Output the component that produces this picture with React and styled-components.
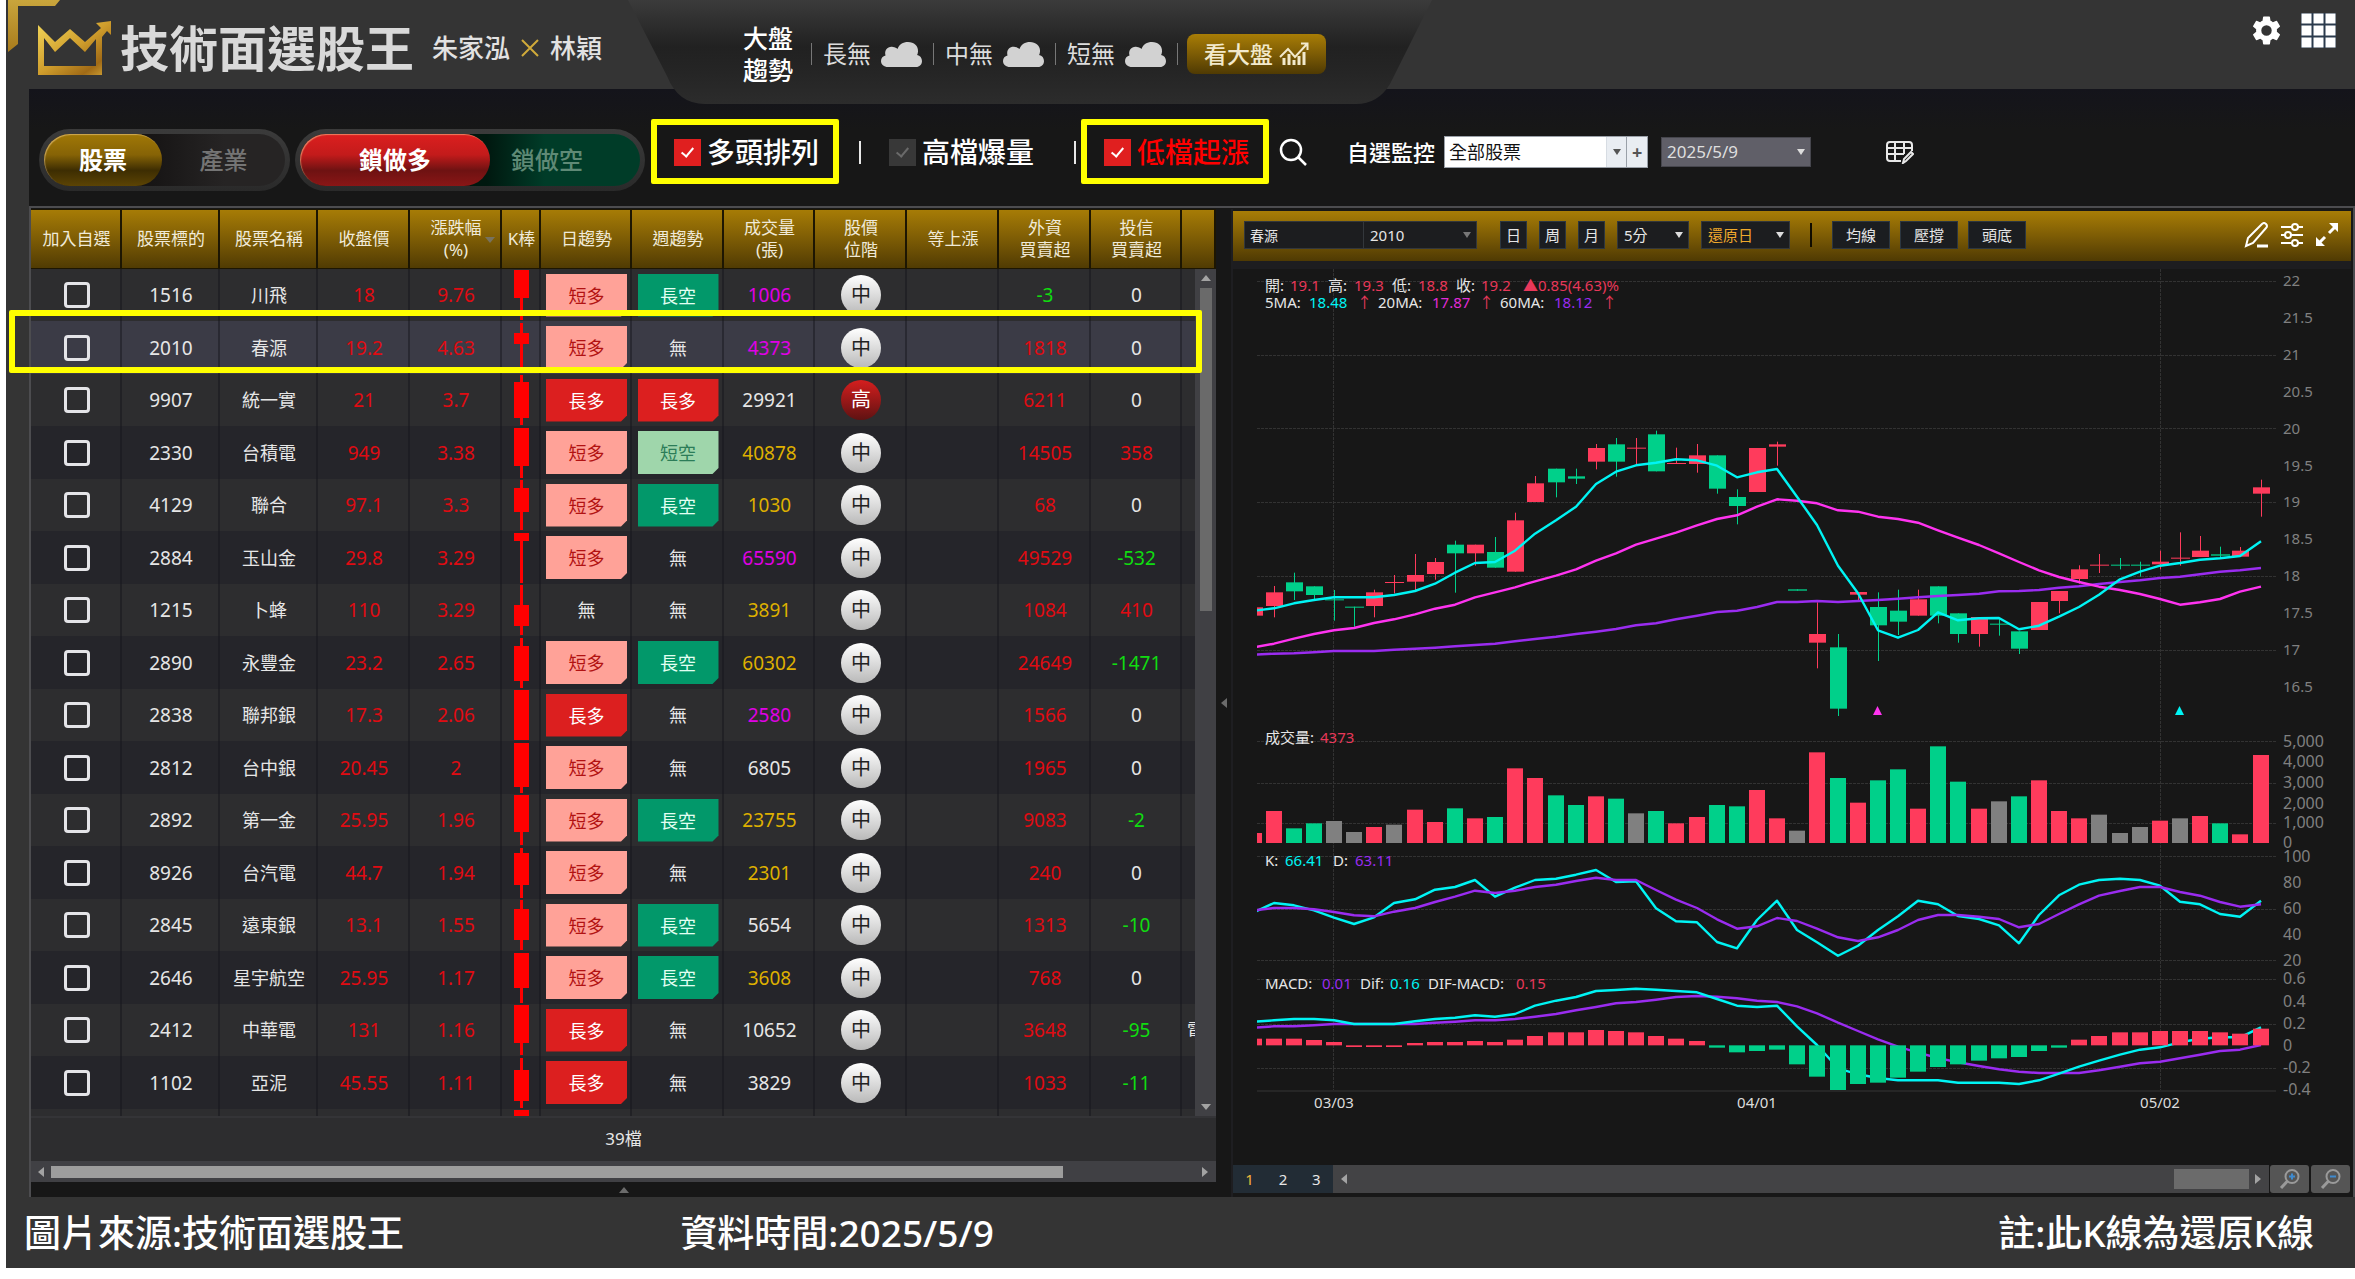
import React from "react";
import styled, { createGlobalStyle, css } from "styled-components";

const Global = createGlobalStyle`
  *, *::before, *::after { box-sizing: border-box; }
  body {
    margin: 0;
    background: #fff;
    color: #e6e6e6;
    font-family: "Noto Sans", "Noto Sans CJK TC", sans-serif;
    font-size: 18px;
    line-height: 22px;
  }
  button, select, input { font: inherit; color: inherit; margin: 0; }
  button { padding: 0; border: 0; background: none; cursor: pointer; }
`;

const gold = "linear-gradient(#a87d06, #7d5c05 50%, #4f3a03)";

/* ---------- page frame ---------- */

const Shell = styled.div`
  margin: 0 0 11px 6px;
  background: #343434;
`;

const Header = styled.header`
  position: relative;
  z-index: 1;
  display: flex;
  align-items: flex-start;
  height: 89px;
`;

const Brand = styled.div`
  position: relative;
  flex: 0 0 622px;
  display: flex;
  align-items: center;
  height: 89px;
  padding: 6px 0 0 32px;
`;

const Corner = styled.svg`
  position: absolute;
  left: 2px;
  top: 0;
`;

const Title = styled.h1`
  margin: 0 18px 0 9px;
  font-size: 49px;
  line-height: 56px;
  font-weight: 700;
  color: #d9d9d9;
`;

const Authors = styled.p`
  display: flex;
  align-items: center;
  gap: 10px;
  margin: 0;
  font-size: 26px;
  line-height: 32px;
  font-weight: 500;
  color: #e2e2e2;
`;

const Trend = styled.section`
  position: relative;
  display: flex;
  align-items: center;
  flex: 0 0 804px;
  height: 104px;
  padding: 4px 0 0 115px;
`;

const TrendShape = styled.svg`
  position: absolute;
  inset: 0;
`;

const TrendTitle = styled.h2`
  position: relative;
  width: 50px;
  margin: 0 18px 0 0;
  font-size: 25px;
  line-height: 32px;
  font-weight: 500;
  color: #fff;
`;

const TrendItem = styled.span`
  position: relative;
  display: flex;
  align-items: center;
  gap: 10px;
  margin-right: 11px;
  padding-left: 12px;
  font-size: 24px;
  line-height: 32px;
  color: #dcdcdc;
  &::before {
    content: "";
    position: absolute;
    left: 0;
    height: 22px;
    border-left: 1px solid #777;
  }
`;

const TrendEnd = styled.i`
  position: relative;
  width: 1px;
  height: 22px;
  margin-right: 9px;
  background: #777;
`;

const MarketButton = styled.button`
  position: relative;
  display: flex;
  align-items: center;
  justify-content: center;
  gap: 6px;
  width: 139px;
  height: 40px;
  border-radius: 8px;
  background: ${gold};
  font-size: 23px;
  font-weight: 500;
  color: #f2e9cc;
`;

const HeaderTools = styled.nav`
  display: flex;
  align-items: center;
  gap: 20px;
  margin-left: auto;
  padding: 13px 19px 0 0;
  button { display: flex; }
`;

const Content = styled.main`
  margin-left: 23px;
  background: #171717;
`;

/* ---------- toolbar ---------- */

const Toolbar = styled.div`
  display: flex;
  align-items: flex-start;
  height: 117px;
  padding: 40px 0 0 10px;
  background: linear-gradient(#14141b, #171717 40px);
`;

const Switch = styled.div`
  display: flex;
  width: ${(p) => p.$width};
  height: 62px;
  margin-right: 5px;
  padding: 5px;
  border-radius: 31px;
  background: linear-gradient(#3b3b3b, #2a2a2a);
`;

const SwitchTrack = styled.div`
  display: flex;
  flex: 1;
  border-radius: 26px;
  background: ${(p) => p.$fill};
`;

const tones = {
  gold: "linear-gradient(#a17806, #866306 40%, #3d2d02 70%, #5c4404)",
  red: "linear-gradient(#dc1f1f, #c31b1b 40%, #6e1212 70%, #8a1616)",
};

const SwitchButton = styled.button`
  width: ${(p) => p.$width || "auto"};
  flex: ${(p) => (p.$width ? "none" : 1)};
  padding-right: ${(p) => (p.$width ? 0 : p.$pad)};
  border-radius: 26px;
  font-size: 24px;
  font-weight: 500;
  color: ${(p) => p.$color || "#fff"};
  ${(p) =>
    p.$tone &&
    css`
      background: ${tones[p.$tone]};
      box-shadow: inset 1px 1px 1px rgba(255, 220, 160, 0.5);
      font-weight: 700;
    `}
`;

const ToolGroup = styled.div`
  display: flex;
  align-items: center;
  height: 46px;
  margin-left: 24px;
`;

const Filter = styled.label`
  position: relative;
  display: flex;
  align-items: center;
  gap: 6px;
  font-size: 28px;
  line-height: 36px;
  font-weight: 500;
  color: ${(p) => p.$color || "#fff"};
  ${(p) =>
    p.$framed &&
    css`
      &::after {
        content: "";
        position: absolute;
        inset: -15px -20px -14px -23px;
        border: 6px solid #ff0;
        border-radius: 2px;
      }
    `}
`;

const FilterBox = styled.input`
  appearance: none;
  position: relative;
  width: 27px;
  height: 27px;
  background: ${(p) => (p.defaultChecked ? "#e01f1f" : "#383838")};
  &::before {
    content: "";
    position: absolute;
    left: 10px;
    top: 6px;
    width: 7px;
    height: 12px;
    border: solid ${(p) => (p.defaultChecked ? "#fff" : "#6a6a6a")};
    border-width: 0 2px 2px 0;
    transform: rotate(40deg);
  }
`;

const FilterGap = styled.span`
  width: 2px;
  height: 23px;
  margin: 0 28px 0 40px;
  background: #e8e8e8;
`;

const SearchButton = styled.button`
  display: flex;
  margin: 0 40px 0 30px;
`;

const WatchLabel = styled.label`
  margin-right: 9px;
  font-size: 22px;
  font-weight: 500;
  color: #fff;
`;

const SelectWrap = styled.span`
  display: inline-grid;
  align-items: center;
  width: ${(p) => p.$width};
  &::after {
    content: "";
    grid-area: 1 / 1;
    justify-self: end;
    margin-right: 6px;
    border: 4px solid transparent;
    border-top: 6px solid ${(p) => p.$arrow || "#ddd"};
    border-bottom: 0;
    pointer-events: none;
  }
  select {
    grid-area: 1 / 1;
    width: 100%;
    appearance: none;
    border-radius: 0;
    outline: 0;
  }
`;

const WhiteSelect = styled.select`
  height: 32px;
  padding: 0 4px;
  border: 1px solid #9aa0a8;
  background: linear-gradient(90deg, #fff calc(100% - 20px), #c5ccd4 calc(100% - 20px), #e9edf2 calc(100% - 19px));
  font-size: 18px;
  && { color: #111; }
`;

const PlusButton = styled.button`
  width: 21px;
  height: 32px;
  margin-right: 13px;
  border: 1px solid #9aa0a8;
  border-left: 0;
  background: #e9edf2;
  font-weight: 700;
  line-height: 28px;
  color: #555;
`;

const DateSelect = styled.select`
  height: 30px;
  padding: 0 5px;
  border: 1px solid #46464d;
  background: #605f68;
  font-size: 17px;
  color: #dedede;
`;

const EditTable = styled.button`
  display: flex;
  margin-left: 75px;
`;

/* ---------- panels ---------- */

const Panels = styled.div`
  display: grid;
  grid-template-columns: minmax(0, 1185fr) 17px minmax(0, 1118fr);
  padding: 1px 2px 0 0;
  border: solid #4c4c4f;
  border-width: 2px 2px 0 2px;
`;

const ListPanel = styled.section`
  position: relative;
  background: #171717;
`;

const ListView = styled.div`
  position: relative;
  height: 907px;
  overflow: hidden;
`;

const RowFrame = styled.div`
  position: absolute;
  top: 101px;
  left: -22px;
  right: 14px;
  height: 63px;
  border: 6px solid #ff0;
  border-radius: 2px;
  pointer-events: none;
`;

const Table = styled.table`
  width: 100%;
  table-layout: fixed;
  border-collapse: separate;
  border-spacing: 0;
  text-align: center;
`;

const HeadCell = styled.th`
  position: relative;
  height: 60px;
  padding: 0;
  background: ${gold};
  box-shadow: inset -2px 0 #1d1602, inset 0 -1px #1d1602, inset 0 1px #1d1602;
  font-size: 17px;
  font-weight: 400;
  line-height: 22px;
  white-space: pre-line;
  color: #f0ead8;
`;

const SortMark = styled.i`
  position: absolute;
  right: 7px;
  top: 28px;
  border: 5px solid transparent;
  border-top: 6px solid #77725f;
  border-bottom: 0;
`;

const Row = styled.tr`
  height: 52px;
  background: ${(p) => (p.$selected ? "#3b3b46" : "#2d2d2f")};
  &:nth-child(even) {
    height: 53px;
    background: ${(p) => (p.$selected ? "#3b3b46" : "#25252a")};
  }
`;

const Cell = styled.td`
  padding: 0;
  box-shadow: inset -2px 0 rgba(20, 20, 26, 0.45);
  font-size: ${(p) => (p.$han ? "18px" : "19px")};
  line-height: 24px;
  color: ${(p) => p.$color || "#e6e6e6"};
  overflow: hidden;
  white-space: nowrap;
`;

const ClippedCell = styled(Cell)`
  padding-left: 5px;
  text-align: left;
`;

const PickBox = styled.input`
  appearance: none;
  display: block;
  width: 26px;
  height: 26px;
  && { margin: 0 auto; }
  border: 3px solid #e4e4e8;
  border-radius: 4px;
`;

const tagTones = {
  短多: ["#ffa298", "#b21212"],
  長多: ["#dc1f1f", "#fff"],
  長空: ["#02986a", "#e2fff2"],
  短空: ["#9fd6ab", "#2c7d58"],
};

const Tag = styled.span`
  display: block;
  width: 81px;
  height: 43px;
  margin: 0 auto;
  background: ${(p) => tagTones[p.$kind][0]};
  clip-path: polygon(0 0, 100% 0, 100% calc(100% - 6px), calc(100% - 6px) 100%, 0 100%);
  line-height: 44px;
  color: ${(p) => tagTones[p.$kind][1]};
`;

const Badge = styled.span`
  display: block;
  width: 40px;
  height: 40px;
  margin: 0 auto;
  border-radius: 50%;
  background: ${(p) => (p.$high ? "linear-gradient(#d51e1e, #5f1212)" : "linear-gradient(#fff, #b9b9b9)")};
  font-size: 20px;
  line-height: 40px;
  color: ${(p) => (p.$high ? "#fff" : "#222")};
`;

const KBar = styled.svg`
  display: block;
  margin: 0 auto;
`;

const VScroll = styled.div`
  position: absolute;
  top: 60px;
  right: 0;
  bottom: 0;
  width: 21px;
  display: flex;
  flex-direction: column;
  align-items: center;
  padding: 6px 0;
  background: #404044;
`;

const VThumb = styled.div`
  width: 12px;
  height: 323px;
  margin: 7px 0 auto;
  background: #6a6a6a;
`;

const Arrow = styled.button`
  width: 0;
  height: 0;
  border: solid transparent;
  ${(p) =>
    ({
      up: css`border-width: 0 5px 6px; border-bottom-color: #a3a3a3;`,
      down: css`border-width: 6px 5px 0; border-top-color: #a3a3a3;`,
      left: css`border-width: 5px 6px 5px 0; border-right-color: #a3a3a3;`,
      right: css`border-width: 5px 0 5px 6px; border-left-color: #a3a3a3;`,
    })[p.$to]}
`;

const FoldArrow = styled(Arrow)`
  opacity: 0.6;
`;

const ListTotal = styled.div`
  height: 45px;
  border-top: 2px solid #343437;
  background: #2d2d2f;
  font-size: 17px;
  line-height: 42px;
  text-align: center;
`;

const HScroll = styled.div`
  display: flex;
  align-items: center;
  height: 21px;
  padding: 0 8px 0 7px;
  background: #404044;
`;

const HThumb = styled.div`
  width: 1012px;
  height: 12px;
  margin: 0 auto 0 7px;
  background: #9d9d9d;
`;

const FoldBar = styled.div`
  display: flex;
  align-items: center;
  justify-content: center;
  height: 15px;
`;

const Divider = styled.div`
  display: flex;
  align-items: center;
  padding-left: 5px;
  border-right: 2px solid #1e1e21;
`;

const ChartPanel = styled.section`
  padding: 2px 0 4px;
  background: #171717;
`;

const ChartBar = styled.div`
  display: flex;
  align-items: center;
  height: 50px;
  padding: 0 12px 2px 11px;
  background: ${gold};
`;

const ChartSelect = styled.select`
  height: 28px;
  padding: 0 6px;
  border: 1px solid #33373b;
  background: #1c1d1f;
  font-size: 15px;
  color: ${(p) => p.$color || "#e6e6e6"};
`;

const StockName = styled.input`
  width: 119px;
  height: 28px;
  padding: 0 5px;
  border: 1px solid #33373b;
  border-right: 0;
  background: #1c1d1f;
  font-size: 14px;
`;

const BarGroup = styled.div`
  display: flex;
  gap: ${(p) => p.$gap || "12px"};
  margin-left: ${(p) => p.$before};
`;

const BarButton = styled.button`
  width: ${(p) => (p.$wide ? "58px" : "27px")};
  height: 28px;
  border: 1px solid #2c3640;
  background: #1b1d20;
  font-size: 15px;
  line-height: 24px;
`;

const BarRule = styled.i`
  width: 2px;
  height: 24px;
  margin-left: 20px;
  background: #100c00;
`;

const BarTools = styled.div`
  display: flex;
  gap: 12px;
  margin-left: auto;
  button { display: flex; }
`;

const Plot = styled.svg`
  display: block;
  width: 100%;
  height: auto;
  border-top: 8px solid #1d1d20;
  font-family: "Noto Sans", "Noto Sans CJK TC", sans-serif;
  font-size: 15px;
`;

const PageBar = styled.div`
  display: flex;
  height: 28px;
`;

const PageTabs = styled.div`
  display: flex;
  width: 100px;
  background: #222c35;
`;

const PageTab = styled.button`
  flex: 1;
  font-size: 15px;
  color: ${(p) => (p.$on ? "#f0b53a" : "#e6e6e6")};
`;

const PlotScroll = styled.div`
  flex: 1;
  display: flex;
  align-items: center;
  padding: 0 8px;
  background: #434345;
`;

const PlotThumb = styled.div`
  width: 75px;
  height: 20px;
  margin: 0 6px 0 auto;
  background: #6b6b6b;
`;

const ZoomButton = styled.button`
  display: flex;
  align-items: center;
  justify-content: center;
  width: 39px;
  margin: 0 1px 0 1px;
  border-radius: 3px;
  background: #555;
`;

const Notes = styled.footer`
  display: grid;
  grid-template-columns: 657fr 1319fr auto;
  align-items: center;
  height: 71px;
  padding: 0 41px 0 18px;
  font-size: 37px;
  line-height: 44px;
  font-weight: 500;
  color: #fff;
  p { margin: 0; }
`;

/* ---------- data ---------- */

const columns = [
  ["加入自選", 91], ["股票標的", 98], ["股票名稱", 98], ["收盤價", 92], ["漲跌幅\n(%)", 92],
  ["K棒", 39], ["日趨勢", 91], ["週趨勢", 92], ["成交量\n(張)", 91], ["股價\n位階", 92],
  ["等上漲", 92], ["外資\n買賣超", 92], ["投信\n買賣超", 91], ["", 34],
];

const volColors = { m: "#e000e6", y: "#deb000", w: "#e6e6e6" };

// code, name, close, change, candle body [top, bottom], day, week, volume, tone, level, foreign, trust, tail
const stocks = [
  ["1516", "川飛", "18", "9.76", [0, 28], "短多", "長空", "1006", "m", "中", -3, 0],
  ["2010", "春源", "19.2", "4.63", [10, 21], "短多", "無", "4373", "m", "中", 1818, 0],
  ["9907", "統一實", "21", "3.7", [7, 43], "長多", "長多", "29921", "w", "高", 6211, 0],
  ["2330", "台積電", "949", "3.38", [0, 38], "短多", "短空", "40878", "y", "中", 14505, 358],
  ["4129", "聯合", "97.1", "3.3", [8, 32], "短多", "長空", "1030", "y", "中", 68, 0],
  ["2884", "玉山金", "29.8", "3.29", [0, 8], "短多", "無", "65590", "m", "中", 49529, -532],
  ["1215", "卜蜂", "110", "3.29", [20, 41], "無", "無", "3891", "y", "中", 1084, 410],
  ["2890", "永豐金", "23.2", "2.65", [8, 43], "短多", "長空", "60302", "y", "中", 24649, -1471],
  ["2838", "聯邦銀", "17.3", "2.06", [0, 50], "長多", "無", "2580", "m", "中", 1566, 0],
  ["2812", "台中銀", "20.45", "2", [0, 44], "短多", "無", "6805", "w", "中", 1965, 0],
  ["2892", "第一金", "25.95", "1.96", [0, 37], "短多", "長空", "23755", "y", "中", 9083, -2],
  ["8926", "台汽電", "44.7", "1.94", [5, 37], "短多", "無", "2301", "y", "中", 240, 0],
  ["2845", "遠東銀", "13.1", "1.55", [9, 40], "短多", "長空", "5654", "w", "中", 1313, -10],
  ["2646", "星宇航空", "25.95", "1.17", [0, 35], "短多", "長空", "3608", "y", "中", 768, 0],
  ["2412", "中華電", "131", "1.16", [0, 38], "長多", "無", "10652", "w", "中", 3648, -95, "電"],
  ["1102", "亞泥", "45.55", "1.11", [12, 43], "長多", "無", "3829", "w", "中", 1033, -11],
];

// colour, body top, body bottom, wick top, wick bottom; in thirds of a unit
const candles = [
  ["r", 622, 647, 622, 647], ["r", 577, 618, 558, 652], ["g", 547, 574, 518, 600], ["g", 559, 585, 559, 598],
  ["g", 598, 601, 570, 662], ["g", 620, 623, 620, 680], ["r", 577, 618, 569, 652], ["r", 546, 549, 525, 580],
  ["r", 525, 545, 462, 572], ["r", 486, 522, 474, 539], ["g", 434, 460, 422, 578], ["r", 434, 460, 434, 497],
  ["g", 456, 503, 411, 503], ["r", 361, 515, 338, 515], ["r", 250, 306, 228, 306], ["g", 206, 247, 206, 292],
  ["g", 229, 236, 206, 252], ["r", 144, 185, 132, 208], ["g", 133, 185, 114, 230], ["r", 143, 146, 114, 195],
  ["g", 103, 214, 92, 214], ["r", 189, 192, 143, 192], ["r", 166, 192, 132, 218], ["g", 166, 266, 166, 281],
  ["g", 291, 318, 268, 373], ["r", 144, 276, 144, 276], ["r", 133, 140, 125, 197], ["g", 568, 572, 568, 572],
  ["r", 702, 728, 607, 805], ["g", 742, 926, 702, 948], ["r", 576, 584, 576, 605], ["g", 621, 676, 577, 783],
  ["g", 632, 665, 569, 705], ["r", 598, 647, 569, 647], ["g", 559, 647, 559, 670], ["g", 640, 702, 640, 728],
  ["r", 651, 702, 651, 740], ["g", 671, 674, 655, 707], ["g", 694, 746, 694, 762], ["r", 606, 690, 606, 690],
  ["r", 573, 603, 573, 640], ["r", 508, 537, 496, 551], ["r", 494, 497, 462, 519], ["g", 494, 497, 474, 508],
  ["g", 494, 497, 485, 530], ["r", 485, 493, 452, 508], ["r", 473, 476, 397, 497], ["r", 452, 471, 408, 471],
  ["g", 463, 467, 440, 471], ["r", 452, 470, 441, 470], ["r", 262, 281, 239, 350],
];

const ma5 = [632, 625, 610, 600, 592, 592, 592, 585, 573, 551, 518, 489, 486, 452, 401, 361, 320, 252, 215, 196, 188, 178, 181, 197, 232, 217, 207, 290, 375, 497, 580, 691, 713, 690, 637, 661, 655, 654, 688, 677, 650, 621, 584, 538, 515, 497, 489, 479, 475, 468, 424];
const ma20 = [742, 731, 716, 702, 691, 684, 669, 658, 643, 626, 614, 592, 577, 562, 544, 527, 508, 482, 460, 434, 416, 398, 376, 357, 346, 320, 298, 302, 310, 331, 335, 350, 357, 368, 391, 413, 435, 460, 486, 511, 531, 546, 560, 570, 582, 597, 614, 607, 597, 575, 560];
const ma60 = [764, 761, 760, 757, 753, 753, 753, 749, 746, 743, 739, 735, 731, 724, 717, 710, 702, 695, 687, 676, 670, 658, 647, 636, 632, 621, 606, 606, 603, 606, 603, 600, 596, 592, 588, 585, 581, 574, 573, 570, 563, 559, 552, 546, 541, 534, 530, 523, 515, 511, 504];
const volumes = [369, 303, 355, 340, 333, 366, 351, 344, 299, 336, 295, 325, 321, 175, 204, 256, 285, 259, 266, 310, 303, 340, 321, 285, 289, 240, 325, 362, 127, 204, 278, 211, 178, 296, 109, 215, 296, 274, 259, 211, 303, 325, 314, 369, 351, 332, 325, 318, 340, 373, 135];
const volumeTones = "rrggxxrxrrgrgrrggrgxgrrggrrxrgrggrggrxgrrrxxxrxrgrr";
const kLine = [607, 579, 586, 601, 623, 642, 622, 579, 568, 539, 531, 510, 560, 533, 510, 506, 494, 480, 516, 514, 595, 634, 637, 696, 715, 630, 572, 660, 697, 737, 707, 660, 619, 572, 583, 618, 627, 646, 700, 615, 556, 524, 510, 506, 510, 527, 575, 583, 612, 620, 572];
const dLine = [601, 594, 594, 598, 606, 616, 619, 605, 594, 576, 560, 542, 549, 542, 531, 524, 513, 503, 510, 510, 540, 569, 594, 628, 656, 649, 624, 633, 656, 682, 693, 682, 660, 630, 615, 615, 620, 627, 652, 642, 612, 583, 557, 543, 531, 531, 546, 557, 576, 590, 583];
const difLine = [185, 181, 177, 177, 181, 192, 192, 192, 184, 177, 173, 166, 170, 162, 137, 122, 111, 93, 90, 86, 89, 93, 97, 117, 137, 141, 137, 199, 255, 325, 343, 354, 361, 361, 361, 368, 368, 368, 372, 361, 341, 320, 302, 284, 269, 262, 247, 236, 232, 232, 202];
const macdLine = [203, 199, 199, 196, 192, 192, 192, 192, 192, 188, 185, 181, 181, 177, 170, 162, 151, 141, 130, 126, 119, 111, 108, 110, 115, 122, 126, 139, 160, 188, 213, 238, 260, 278, 294, 307, 318, 328, 335, 339, 339, 339, 331, 320, 310, 305, 295, 284, 273, 269, 255];
const histogram = [236, 236, 236, 240, 246, 261, 261, 261, 249, 246, 246, 243, 246, 239, 228, 217, 217, 210, 213, 217, 228, 236, 243, 263, 277, 273, 269, 313, 350, 390, 372, 368, 353, 335, 321, 313, 302, 295, 291, 273, 263, 239, 228, 217, 217, 213, 213, 213, 217, 221, 206];

const tone = { r: "#ff3b5c", g: "#00d08a", x: "#808080" };
const cyan = "#00f4f4";
const pink = "#ff33f0";
const violet = "#9a2cf0";

const cx = (i) => Math.round(1253.5 + i * 20.14);
const line = (values, origin) => values.map((v, i) => `${cx(i)},${(origin + v / 3).toFixed(1)}`).join(" ");

const gridRows = [281, 355, 428, 502, 576, 650, 741, 783, 823, 856, 909, 960, 979, 1024, 1068];
const priceTicks = ["22", "21.5", "21", "20.5", "20", "19.5", "19", "18.5", "18", "17.5", "17", "16.5"];
const lowerTicks = [
  [741, "5,000"], [761, "4,000"], [782, "3,000"], [803, "2,000"], [822, "1,000"], [842, "0"],
  [856, "100"], [882, "80"], [908, "60"], [934, "40"], [960, "20"],
  [978, "0.6"], [1001, "0.4"], [1023, "0.2"], [1045, "0"], [1067, "-0.2"], [1089, "-0.4"],
];

const white = "#e6e6e6";
const red = "#e8385a";
const legends = [
  [1265, 291, "開:", white], [1290, 291, "19.1", red], [1328, 291, "高:", white], [1354, 291, "19.3", red],
  [1392, 291, "低:", white], [1418, 291, "18.8", red], [1456, 291, "收:", white], [1481, 291, "19.2", red],
  [1523, 291, "▲0.85(4.63)%", red],
  [1265, 308, "5MA:", white], [1309, 308, "18.48", cyan], [1357, 308, "↑", red],
  [1378, 308, "20MA:", white], [1432, 308, "17.87", "#e02cd6"], [1479, 308, "↑", red],
  [1500, 308, "60MA:", white], [1554, 308, "18.12", violet], [1602, 308, "↑", red],
  [1265, 743, "成交量:", white], [1320, 743, "4373", red],
  [1265, 866, "K:", white], [1285, 866, "66.41", cyan], [1333, 866, "D:", white], [1355, 866, "63.11", violet],
  [1265, 989, "MACD:", white], [1322, 989, "0.01", violet], [1360, 989, "Dif:", white], [1390, 989, "0.16", cyan],
  [1428, 989, "DIF-MACD:", white], [1516, 989, "0.15", red],
];

/* ---------- pieces ---------- */

const Cloud = () => (
  <svg width="41" height="25" viewBox="0 0 41 25" fill="#d2d2d2" aria-hidden="true">
    <path d="M7 25C3 25 0 22.500 0 19c0-3 2-5 4.500-5.500C3 8 7 4 12 5c2 .2 3.500 1 4.500 2C18 2.500 22 0 27 0c6 0 10.500 4 10 9.500-.1 1.500-.4 2.500-.9 3.500 3 .6 4.900 3 4.900 6 0 3.500-2.500 6-6 6z" />
  </svg>
);

const Signal = ({ kind }) => (kind === "無" ? "無" : <Tag $kind={kind}>{kind}</Tag>);

const signColor = (n) => (n > 0 ? "#e00b12" : n < 0 ? "#10dc10" : "#e6e6e6");

const Candle = ({ body }) => (
  <KBar width="15" height="50" viewBox="0 0 15 50" fill="#f00" aria-hidden="true">
    <rect x="6" width="3" height="50" />
    <rect y={body[0]} width="15" height={body[1] - body[0]} />
  </KBar>
);

function StockTable() {
  return (
    <Table>
      <colgroup>
        {columns.map(([name, width]) => (
          <col key={name} width={width} />
        ))}
      </colgroup>
      <thead>
        <tr>
          {columns.map(([name], i) => (
            <HeadCell key={name} scope="col">
              {name}
              {i === 4 && <SortMark />}
            </HeadCell>
          ))}
        </tr>
      </thead>
      <tbody>
        {stocks.map(([code, name, close, change, body, day, week, vol, vt, level, foreign, trust, tail]) => (
          <Row key={code} $selected={code === "2010"}>
            <Cell><PickBox type="checkbox" aria-label={name} /></Cell>
            <Cell>{code}</Cell>
            <Cell $han>{name}</Cell>
            <Cell $color="#e00b12">{close}</Cell>
            <Cell $color="#e00b12">{change}</Cell>
            <Cell><Candle body={body} /></Cell>
            <Cell $han><Signal kind={day} /></Cell>
            <Cell $han><Signal kind={week} /></Cell>
            <Cell $color={volColors[vt]}>{vol}</Cell>
            <Cell><Badge $high={level === "高"}>{level}</Badge></Cell>
            <Cell />
            <Cell $color={signColor(foreign)}>{foreign}</Cell>
            <Cell $color={signColor(trust)}>{trust}</Cell>
            <ClippedCell $han>{tail}</ClippedCell>
          </Row>
        ))}
        <Row>
          {columns.map(([name], i) => (
            <Cell key={name}>{i === 5 && <Candle body={[0, 20]} />}</Cell>
          ))}
        </Row>
      </tbody>
    </Table>
  );
}

function Chart() {
  return (
    <Plot viewBox="1233 269 1118 896" role="img" aria-label="K線圖">
      <defs>
        <clipPath id="plotArea">
          <rect x="1257" y="269" width="1020" height="830" />
        </clipPath>
      </defs>
      <g stroke="#323232" strokeDasharray="3 1">
        {gridRows.map((y) => (
          <line key={y} x1="1257" x2="2276" y1={y + 0.5} y2={y + 0.5} />
        ))}
        <line x1="1333.5" x2="1333.5" y1="269" y2="1090" />
        <line x1="2160.500" x2="2160.500" y1="269" y2="1090" />
      </g>
      <rect x="1257" y="1090" width="1019" height="2" fill="#262626" />
      <g clipPath="url(#plotArea)">
        {candles.map(([t, top, bottom, high, low], i) => {
          const half = bottom - top < 5 ? 9 : 8;
          return (
            <g key={i} fill={tone[t]}>
              <rect x={cx(i)} y={400 + high / 3} width="1" height={(low - high) / 3} />
              <rect x={cx(i) - half} y={400 + top / 3} width={half * 2 + 1} height={(bottom - top) / 3} />
            </g>
          );
        })}
        {volumes.map((v, i) => (
          <rect key={i} x={cx(i) - 8} y={710 + v / 3} width="16" height={133 - v / 3} fill={tone[volumeTones[i]]} />
        ))}
        <g fill="none" strokeWidth="2.400" strokeLinejoin="round">
          <polyline points={line(ma60, 400)} stroke={violet} />
          <polyline points={line(ma20, 400)} stroke={pink} />
          <polyline points={line(ma5, 400)} stroke={cyan} />
          <polyline points={line(kLine, 710)} stroke={cyan} />
          <polyline points={line(dLine, 710)} stroke={violet} />
          <polyline points={line(macdLine, 960)} stroke={violet} />
          <polyline points={line(difLine, 960)} stroke={cyan} />
        </g>
        {histogram.map((v, i) => (
          <rect
            key={i}
            x={cx(i) - 8}
            y={960 + Math.min(v, 256) / 3}
            width="16"
            height={Math.abs(v - 256) / 3}
            fill={v > 262 ? tone.g : tone.r}
          />
        ))}
      </g>
      <path d="M1877.500 706l4.500 9h-9z" fill={pink} />
      <path d="M2179.500 706l4.500 9h-9z" fill={cyan} />
      <g fill="#808080">
        {priceTicks.map((t, i) => (
          <text key={t} x="2283" y={286 + Math.round(i * 36.9)}>{t}</text>
        ))}
        {lowerTicks.map(([y, t]) => (
          <text key={y} x="2283" y={y + 6} fontSize="16">{t}</text>
        ))}
      </g>
      {legends.map(([x, y, t, fill]) => (
        <text key={`${x}-${y}`} x={x} y={y} fill={fill}>{t}</text>
      ))}
      <g fill="#dcdcdc" textAnchor="middle">
        <text x="1334" y="1108">03/03</text>
        <text x="1757" y="1108">04/01</text>
        <text x="2160" y="1108">05/02</text>
      </g>
    </Plot>
  );
}

const Magnifier = ({ plus }) => (
  <svg width="22" height="22" viewBox="0 0 22 22" fill="none" stroke="#9a9a9a" strokeWidth="2" aria-hidden="true">
    <circle cx="13" cy="8.500" r="6.500" />
    <path d="M8.500 13L2 20" strokeWidth="3" />
    <path d={plus ? "M10 8.500h6M13 5.500v6" : "M10 8.500h6"} stroke="#3f8bd0" />
  </svg>
);

export default function App() {
  return (
    <>
      <Global />
      <Shell>
        <Header>
          <Brand>
            <Corner width="54" height="52" viewBox="0 0 54 52" aria-hidden="true">
              <defs>
                <linearGradient id="cornerGold" x1="0" y1="0" x2="0" y2="1">
                  <stop offset="0" stopColor="#c9a53c" />
                  <stop offset="1" stopColor="#a87b1c" />
                </linearGradient>
              </defs>
              <path d="M0 0h52l-5 6H10v38l-10 8z" fill="url(#cornerGold)" />
            </Corner>
            <svg width="73" height="54" viewBox="0 0 73 54" aria-hidden="true">
              <defs>
                <linearGradient id="crownGold" x1="0" y1="0" x2="1" y2="1">
                  <stop offset="0" stopColor="#f2d75a" />
                  <stop offset=".5" stopColor="#cf9d2c" />
                  <stop offset=".8" stopColor="#a06a16" />
                  <stop offset="1" stopColor="#d8ab3a" />
                </linearGradient>
              </defs>
              <path
                d="M0 4l17 17L32 8l15 13L63 7l-5-5 15-2v14l-4-4-5 6v38H0zM6 17v28h52V18L47 31 32 17 17 31z"
                fill="url(#crownGold)"
                fillRule="evenodd"
              />
            </svg>
            <Title>技術面選股王</Title>
            <Authors>
              朱家泓
              <svg width="20" height="18" viewBox="0 0 20 18" stroke="#d0aa3a" strokeWidth="2" aria-hidden="true">
                <path d="M2 1l16 16M18 1L2 17" />
              </svg>
              林穎
            </Authors>
          </Brand>
          <Trend>
            <TrendShape width="804" height="112" viewBox="0 0 804 112" aria-hidden="true">
              <defs>
                <linearGradient id="tabFill" x1="0" y1="0" x2="0" y2="1">
                  <stop offset="0" stopColor="#3b3b3b" />
                  <stop offset=".45" stopColor="#212121" />
                  <stop offset=".7" stopColor="#252525" />
                  <stop offset="1" stopColor="#2c2c2c" />
                </linearGradient>
              </defs>
              <path d="M0 0L39 76Q50 104 77 104H728Q750 104 762 84L804 0z" fill="url(#tabFill)" />
            </TrendShape>
            <TrendTitle>大盤趨勢</TrendTitle>
            <TrendItem>長無<Cloud /></TrendItem>
            <TrendItem>中無<Cloud /></TrendItem>
            <TrendItem>短無<Cloud /></TrendItem>
            <TrendEnd />
            <MarketButton type="button">
              看大盤
              <svg width="30" height="24" viewBox="0 0 30 24" fill="none" stroke="#f2e9cc" strokeWidth="2" aria-hidden="true">
                <path d="M1 15l8-8 7 8L28 2M22 1.500h6.500V8" />
                <path d="M5 23v-7M10 23V12M15 23v-5M20 23v-9M25 23V10" strokeWidth="3" />
              </svg>
            </MarketButton>
          </Trend>
          <HeaderTools>
            <button type="button" aria-label="設定">
              <svg width="29" height="29" viewBox="2 2 20 20" fill="#fff">
                <path d="M19.140 12.940c.04-.3.060-.61.060-.94 0-.32-.02-.64-.07-.94l2.030-1.580a.49.49 0 0 0 .12-.61l-1.920-3.320a.49.49 0 0 0-.59-.22l-2.390.96a7 7 0 0 0-1.620-.94l-.36-2.540a.48.48 0 0 0-.48-.41h-3.840a.48.48 0 0 0-.47.41l-.36 2.540c-.59.24-1.130.57-1.620.94l-2.390-.96a.48.48 0 0 0-.59.22L2.740 8.870a.48.48 0 0 0 .12.61l2.030 1.580a6 6 0 0 0 0 1.880l-2.030 1.580a.49.49 0 0 0-.12.61l1.920 3.320c.12.22.37.29.59.22l2.390-.96c.5.38 1.030.7 1.620.94l.36 2.540c.05.24.24.41.48.41h3.840c.24 0 .44-.17.47-.41l.36-2.540a7 7 0 0 0 1.620-.94l2.390.96c.22.08.47 0 .59-.22l1.920-3.320a.48.48 0 0 0-.12-.61zM12 15.600a3.600 3.600 0 1 1 0-7.200 3.600 3.600 0 0 1 0 7.200z" />
              </svg>
            </button>
            <button type="button" aria-label="功能選單">
              <svg width="35" height="35" viewBox="0 0 35 35" fill="#fff">
                <rect width="35" height="35" fill="#2b3a4c" />
                {[0, 1, 2].map((r) =>
                  [0, 1, 2].map((c) => <rect key={`${r}${c}`} x={c * 12 + 0.5} y={r * 12 + 0.5} width="10" height="10" />)
                )}
              </svg>
            </button>
          </HeaderTools>
        </Header>

        <Content>
          <Toolbar>
            <Switch $width="251px">
              <SwitchTrack $fill="linear-gradient(90deg, #171515 45%, #262424 75%)">
                <SwitchButton type="button" $width="118px" $tone="gold">股票</SwitchButton>
                <SwitchButton type="button" $pad="0" $color="#757575">產業</SwitchButton>
              </SwitchTrack>
            </Switch>
            <Switch $width="350px">
              <SwitchTrack $fill="linear-gradient(90deg, #00180f 55%, #003c28 72%)">
                <SwitchButton type="button" $width="190px" $tone="red">鎖做多</SwitchButton>
                <SwitchButton type="button" $pad="36px" $color="#5f8a76">鎖做空</SwitchButton>
              </SwitchTrack>
            </Switch>
            <ToolGroup>
              <Filter $framed><FilterBox type="checkbox" defaultChecked />多頭排列</Filter>
              <FilterGap />
              <Filter><FilterBox type="checkbox" />高檔爆量</Filter>
              <FilterGap />
              <Filter $framed $color="#f00"><FilterBox type="checkbox" defaultChecked />低檔起漲</Filter>
              <SearchButton type="button" aria-label="搜尋">
                <svg width="28" height="28" viewBox="0 0 28 28" fill="none" stroke="#fff" strokeWidth="2.500">
                  <circle cx="12" cy="12" r="10" />
                  <path d="M19 19l8 8" />
                </svg>
              </SearchButton>
              <WatchLabel htmlFor="watch">自選監控</WatchLabel>
              <SelectWrap $width="183px" $arrow="#555">
                <WhiteSelect id="watch"><option>全部股票</option></WhiteSelect>
              </SelectWrap>
              <PlusButton type="button">+</PlusButton>
              <SelectWrap $width="150px">
                <DateSelect aria-label="日期"><option>2025/5/9</option></DateSelect>
              </SelectWrap>
              <EditTable type="button" aria-label="編輯表格">
                <svg width="28" height="23" viewBox="0 0 28 23" fill="none" stroke="#e8e8e8" strokeWidth="2">
                  <path d="M15 20H4a3 3 0 0 1-3-3V4a3 3 0 0 1 3-3h19a3 3 0 0 1 3 3v6M1 7h25M1 13h17M9 1v19M18 1v12" />
                  <path d="M17 22l1-4 7-7 2 2-7 7z" />
                </svg>
              </EditTable>
            </ToolGroup>
          </Toolbar>

          <Panels>
            <ListPanel>
              <ListView>
                <StockTable />
                <VScroll>
                  <Arrow type="button" $to="up" aria-label="上" />
                  <VThumb />
                  <Arrow type="button" $to="down" aria-label="下" />
                </VScroll>
              </ListView>
              <RowFrame />
              <ListTotal>39檔</ListTotal>
              <HScroll>
                <Arrow type="button" $to="left" aria-label="左" />
                <HThumb />
                <Arrow type="button" $to="right" aria-label="右" />
              </HScroll>
              <FoldBar><FoldArrow type="button" $to="up" aria-label="收合清單" /></FoldBar>
            </ListPanel>
            <Divider><FoldArrow type="button" $to="left" aria-label="收合圖表" /></Divider>
            <ChartPanel>
              <ChartBar>
                <StockName aria-label="股票名稱" defaultValue="春源" />
                <SelectWrap $width="114px" $arrow="#777">
                  <ChartSelect aria-label="股票代號"><option>2010</option></ChartSelect>
                </SelectWrap>
                <BarGroup $before="23px">
                  <BarButton type="button">日</BarButton>
                  <BarButton type="button">周</BarButton>
                  <BarButton type="button">月</BarButton>
                  <SelectWrap $width="72px">
                    <ChartSelect aria-label="分線"><option>5分</option></ChartSelect>
                  </SelectWrap>
                  <SelectWrap $width="89px">
                    <ChartSelect aria-label="還原" $color="#f0a92c"><option>還原日</option></ChartSelect>
                  </SelectWrap>
                </BarGroup>
                <BarRule />
                <BarGroup $before="20px" $gap="10px">
                  <BarButton type="button" $wide>均線</BarButton>
                  <BarButton type="button" $wide>壓撐</BarButton>
                  <BarButton type="button" $wide>頭底</BarButton>
                </BarGroup>
                <BarTools>
                  <button type="button" aria-label="畫線">
                    <svg width="25" height="26" viewBox="0 0 25 26" fill="none" stroke="#fff" strokeWidth="2">
                      <path d="M2 24l2-8L18 2q2-2 4 0t0 4L9 21z" />
                      <path d="M13 24h11" strokeWidth="3" />
                    </svg>
                  </button>
                  <button type="button" aria-label="參數">
                    <svg width="22" height="26" viewBox="0 0 22 26" fill="none" stroke="#fff" strokeWidth="2">
                      <path d="M0 5h11M17 5h5M0 13h4M10 13h12M0 21h11M17 21h5" />
                      <circle cx="14" cy="5" r="3" />
                      <circle cx="7" cy="13" r="3" />
                      <circle cx="14" cy="21" r="3" />
                    </svg>
                  </button>
                  <button type="button" aria-label="放大">
                    <svg width="24" height="26" viewBox="0 0 24 26" fill="#fff">
                      <path d="M10 15l-7 7M14 11l7-7" stroke="#fff" strokeWidth="3" />
                      <path d="M14 1h9v9zM1 15v9h9z" />
                    </svg>
                  </button>
                </BarTools>
              </ChartBar>
              <Chart />
              <PageBar>
                <PageTabs>
                  <PageTab type="button" $on>1</PageTab>
                  <PageTab type="button">2</PageTab>
                  <PageTab type="button">3</PageTab>
                </PageTabs>
                <PlotScroll>
                  <Arrow type="button" $to="left" aria-label="往前" />
                  <PlotThumb />
                  <Arrow type="button" $to="right" aria-label="往後" />
                </PlotScroll>
                <ZoomButton type="button" aria-label="拉近"><Magnifier plus /></ZoomButton>
                <ZoomButton type="button" aria-label="拉遠"><Magnifier /></ZoomButton>
              </PageBar>
            </ChartPanel>
          </Panels>
        </Content>

        <Notes>
          <p>圖片來源:技術面選股王</p>
          <p>資料時間:2025/5/9</p>
          <p>註:此K線為還原K線</p>
        </Notes>
      </Shell>
    </>
  );
}
